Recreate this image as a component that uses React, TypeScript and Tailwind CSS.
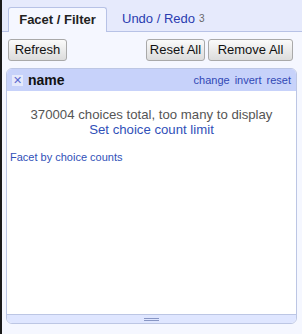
export default function App() {
  return (
    <div className="flex h-[334px] w-[302px] bg-[#1a1a1a] font-['Liberation_Sans',Arial,sans-serif]">
      <div className="ml-[2px] flex flex-1 flex-col bg-[#f5f7ff]">
        {/* tabs */}
        <div className="flex h-[32px] items-end border-b border-[#b7c2e6] bg-[#e6eafc] pl-[6px]">
          <div className="mb-[-1px] flex h-[25px] w-[99px] items-center justify-center rounded-t-[3px] border border-b-0 border-[#b7c2e6] bg-[#f5f7ff] text-[13px] font-bold text-[#222]">
            Facet / Filter
          </div>
          <div className="flex h-[25px] items-center pl-[15px] text-[13px] text-[#2a3cb0]">
            Undo / Redo <span className="ml-[4px] text-[10px] text-[#666]">3</span>
          </div>
        </div>

        {/* buttons */}
        <div className="flex items-center justify-between pl-[6px] pr-[9px] pt-[7px]">
          <Btn label="Refresh" w="w-[59px]" />
          <div className="flex gap-[3px]">
            <Btn label="Reset All" w="w-[59px]" />
            <Btn label="Remove All" w="w-[85px]" />
          </div>
        </div>

        {/* facet panel */}
        <div className="ml-[4px] mr-[5px] mt-[7px] flex flex-1 flex-col overflow-hidden rounded-[6px] border border-[#bcc6e4] bg-white">
          <div className="flex h-[22px] shrink-0 items-center justify-between bg-[#c7d2fa] pl-[5px] pr-[5px]">
            <div className="flex items-center gap-[5px]">
              <span className="flex h-[11px] w-[11px] items-center justify-center bg-[#e5e9fb] text-[11px] leading-none text-[#5a6ad0]">
                ✕
              </span>
              <span className="text-[14px] font-bold text-[#111]">name</span>
            </div>
            <div className="flex gap-[5px] text-[11px] text-[#3148b5]">
              <span>change</span>
              <span>invert</span>
              <span>reset</span>
            </div>
          </div>
          <div className="flex flex-1 flex-col">
            <div className="pt-[16px] text-center text-[13.2px] leading-[15px] text-[#555]">
              370004 choices total, too many to display
            </div>
            <div className="text-center text-[13.2px] leading-[16px] text-[#3050b8]">
              Set choice count limit
            </div>
            <div className="mt-[11px] pl-[3px] text-[11px] text-[#3050b8]">
              Facet by choice counts
            </div>
          </div>
          <div className="flex h-[9px] shrink-0 items-center justify-center border-t border-[#bcc6e4] bg-[#dfe6ff]">
            <div className="flex w-[15px] flex-col gap-[1px]">
              <div className="h-px bg-[#8896c4]" />
              <div className="h-px bg-[#8896c4]" />
            </div>
          </div>
        </div>
        <div className="h-[10px] shrink-0" />
      </div>
    </div>
  );
}

function Btn({ label, w }: { label: string; w: string }) {
  return (
    <div
      className={`${w} flex h-[22px] items-center justify-center rounded-[3px] border border-[#a9a9a9] bg-gradient-to-b from-[#fafafa] to-[#dcdcdc] text-[13px] text-[#111]`}
    >
      {label}
    </div>
  );
}
